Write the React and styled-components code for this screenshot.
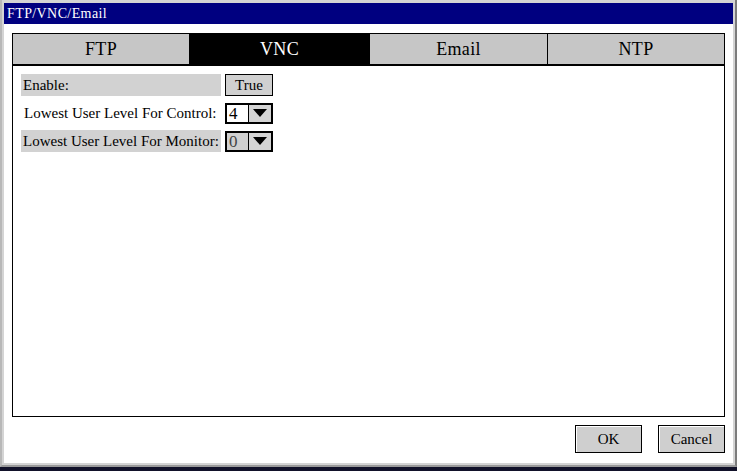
import React, { useState } from 'react';
import styled, { createGlobalStyle } from 'styled-components';

const GlobalStyle = createGlobalStyle`
  html, body {
    margin: 0;
    padding: 0;
    background: #12122a;
  }
  body {
    width: 737px;
    height: 471px;
    overflow: hidden;
    font-family: "Liberation Serif", "Times New Roman", serif;
  }
`;

const Frame = styled.div`
  width: 737px;
  height: 467px;
  box-sizing: border-box;
  background: #d4d4d4;
  border-left: 2px solid #b8b8b8;
  border-right: 2px solid #7c7c7c;
  border-bottom: 2px solid #9a9a9a;
  padding: 3px 2px 2px 2px;
  display: flex;
  flex-direction: column;
`;

const TitleBar = styled.div`
  height: 21px;
  background: #000080;
  color: #fff;
  font-size: 14px;
  letter-spacing: 0.4px;
  line-height: 21px;
  padding-left: 3px;
  flex: none;
`;

const Body = styled.div`
  flex: 1;
  background: #fff;
  padding: 9px 8px 0 8px;
  display: flex;
  flex-direction: column;
`;

const TabPanel = styled.div`
  height: 382px;
  border: 1px solid #000;
  display: flex;
  flex-direction: column;
`;

const TabBar = styled.div`
  display: grid;
  grid-template-columns: 176px 179px 177px 1fr;
  gap: 1px;
  background: #000;
  height: 30px;
  border-bottom: 2px solid #000;
`;

const Tab = styled.div`
  background: ${p => (p.$active ? '#000' : '#c6c6c6')};
  color: ${p => (p.$active ? '#fff' : '#000')};
  font-size: 18px;
  letter-spacing: 0.3px;
  display: flex;
  align-items: center;
  justify-content: center;
  cursor: pointer;
`;

const Content = styled.div`
  padding: 8px 0 0 8px;
  display: flex;
  flex-direction: column;
  gap: 6px;
`;

const Row = styled.div`
  display: flex;
  align-items: center;
  gap: 3px;
  height: 22px;
`;

const Label = styled.div`
  width: ${p => p.$width || 200}px;
  height: 22px;
  box-sizing: border-box;
  padding-left: ${p => p.$indent || 2}px;
  background: ${p => (p.$shaded ? '#d2d2d2' : 'transparent')};
  font-size: 15px;
  line-height: 22px;
  white-space: nowrap;
  color: #000;
`;

const ValueButton = styled.button`
  width: 48px;
  height: 22px;
  box-sizing: border-box;
  border: 1px solid #000;
  background: #d0d0d0;
  font-family: "Liberation Serif", "Times New Roman", serif;
  font-size: 15px;
  padding: 0;
  margin-left: 1px;
`;

const Select = styled.div`
  width: 48px;
  height: 21px;
  box-sizing: border-box;
  border: 2px solid #000;
  display: flex;
  background: ${p => (p.$disabled ? '#d0d0d0' : '#fff')};
  margin-left: 1px;
`;

const SelectValue = styled.div`
  flex: 1;
  font-size: 17px;
  line-height: 17px;
  padding-left: 2px;
  color: ${p => (p.$disabled ? '#444' : '#000')};
`;

const Arrow = styled.div`
  width: 22px;
  background: #d4d4d4;
  border-left: 1px solid #000;
  display: flex;
  align-items: center;
  justify-content: center;
`;

const Footer = styled.div`
  display: flex;
  justify-content: flex-end;
  gap: 16px;
  padding-top: 8px;
`;

const DialogButton = styled.button`
  width: 67px;
  height: 28px;
  box-sizing: border-box;
  border: 1px solid #000;
  background: #cfcfcf;
  box-shadow: inset 1px 1px 0 #fff;
  font-family: "Liberation Serif", "Times New Roman", serif;
  font-size: 15px;
  padding: 0;
`;

const DownArrow = () => (
  <svg width="14" height="8" viewBox="0 0 14 8">
    <polygon points="0,0 14,0 7,8" fill="#000" />
  </svg>
);

const tabs = ['FTP', 'VNC', 'Email', 'NTP'];

export default function App() {
  const [active, setActive] = useState('VNC');

  return (
    <>
      <GlobalStyle />
      <Frame>
        <TitleBar>FTP/VNC/Email</TitleBar>
        <Body>
          <TabPanel>
            <TabBar>
              {tabs.map(t => (
                <Tab key={t} $active={t === active} onClick={() => setActive(t)}>
                  {t}
                </Tab>
              ))}
            </TabBar>
            <Content>
              <Row>
                <Label $shaded>Enable:</Label>
                <ValueButton>True</ValueButton>
              </Row>
              <Row>
                <Label $indent={3}>Lowest User Level For Control:</Label>
                <Select>
                  <SelectValue>4</SelectValue>
                  <Arrow><DownArrow /></Arrow>
                </Select>
              </Row>
              <Row>
                <Label $shaded>Lowest User Level For Monitor:</Label>
                <Select $disabled>
                  <SelectValue $disabled>0</SelectValue>
                  <Arrow><DownArrow /></Arrow>
                </Select>
              </Row>
            </Content>
          </TabPanel>
          <Footer>
            <DialogButton>OK</DialogButton>
            <DialogButton>Cancel</DialogButton>
          </Footer>
        </Body>
      </Frame>
    </>
  );
}
